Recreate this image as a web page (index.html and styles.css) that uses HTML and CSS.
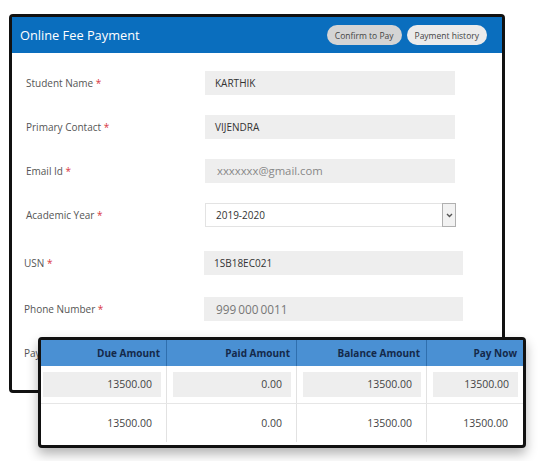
FILE: index.html
```html
<!DOCTYPE html>
<html lang="en">
<head>
  <meta charset="UTF-8">
  <title>Online Fee Payment</title>
  <link rel="stylesheet" href="styles.css">
</head>
<body>
  <!-- fee payment form -->
  <div class="card">
    <div class="card-head">
      <div class="title">Online Fee Payment</div>
      <div class="actions">
        <button class="pill pill-dark">Confirm to Pay</button>
        <button class="pill">Payment history</button>
      </div>
    </div>
    <div class="form">
      <div class="row">
        <label>Student Name <span class="req">*</span></label>
        <div class="field">KARTHIK</div>
      </div>
      <div class="row">
        <label>Primary Contact <span class="req">*</span></label>
        <div class="field">VIJENDRA</div>
      </div>
      <div class="row">
        <label>Email Id <span class="req">*</span></label>
        <div class="field ph">xxxxxxx@gmail.com</div>
      </div>
      <div class="row">
        <label>Academic Year <span class="req">*</span></label>
        <div class="field select">2019-2020<span class="arrow"><svg width="7" height="5" viewBox="0 0 7 5"><path d="M1 1l2.5 2.5L6 1" fill="none" stroke="#555" stroke-width="1.4"/></svg></span></div>
      </div>
      <div class="row wide gap-lg">
        <label>USN <span class="req">*</span></label>
        <div class="field">1SB18EC021</div>
      </div>
      <div class="row wide gap-md">
        <label>Phone Number <span class="req">*</span></label>
        <div class="field ph ph-dark">999 000 0011</div>
      </div>
      <div class="row wide">
        <label>Payment Mode <span class="req">*</span></label>
        <div class="field"></div>
      </div>
    </div>
  </div>

  <!-- amounts popup -->
  <div class="amounts">
    <table>
      <tr>
        <th class="c1">Due Amount</th>
        <th class="c2">Paid Amount</th>
        <th class="c3">Balance Amount</th>
        <th class="c4">Pay Now</th>
      </tr>
      <tr class="boxed">
        <td><span>13500.00</span></td>
        <td><span>0.00</span></td>
        <td><span>13500.00</span></td>
        <td><span>13500.00</span></td>
      </tr>
      <tr class="plain">
        <td>13500.00</td>
        <td>0.00</td>
        <td>13500.00</td>
        <td>13500.00</td>
      </tr>
    </table>
  </div>
</body>
</html>
```

FILE: styles.css
```css
body { margin:0; background:#fff; font-family:"Open Sans", "DejaVu Sans", sans-serif; }
.card { width:490px; margin:14px 0 0 9px; border:3px solid #111; border-radius:4px; background:#fff; }
.card-head { height:36px; background:#0a6ebe; display:flex; align-items:center; padding:0 15px 0 8px; }
.card-head .title { color:#fff; font-size:12.8px; }
.card-head .actions { margin-left:auto; display:flex; gap:5px; }
.pill { border:0; border-radius:10px; height:20px; padding:0 8px; background:#ebebeb; color:#444; font-family:inherit; font-size:8.5px; }
.pill-dark { background:#d4d4d4; }
.form { padding:18px 0 25px 14px; }
.row { display:flex; align-items:center; height:24px; margin-bottom:20px; }
.row label { width:179px; font-size:10px; color:#555; }
.req { color:#d9363e; }
.field { width:240px; height:24px; line-height:24px; padding-left:10px; background:#eee; font-size:10px; color:#333; }
.field.ph { font-size:11.3px; color:#888; padding-left:12px; width:238px; }
.field.ph-dark { color:#777; font-size:11.8px; word-spacing:-1px; }
.select { position:relative; background:#fff; border:1px solid #e3e3e3; height:22px; line-height:22px; width:239px; }
.select .arrow { position:absolute; right:-1px; top:-1px; width:12px; height:22px; border:1px solid #b0b0b0; background:#f2f2f2; display:flex; align-items:center; justify-content:center; }
.row.wide { margin-left:-2px; }
.row.wide label { width:180px; }
.row.wide .field { width:249px; }
.row.wide .field.ph { width:247px; }
.row.gap-lg { margin-top:24px; }
.row.gap-md { margin-top:22px; }
.row:last-child { margin-bottom:0; }

.amounts { position:absolute; left:38px; top:337px; width:482px; border:3px solid #111; border-radius:4px; background:#fff; box-shadow:0 6px 12px rgba(0,0,0,.3); }
.amounts table { width:100%; border-collapse:collapse; table-layout:fixed; margin-bottom:3px; }
.amounts th { height:26px; background:#4a90d3; color:#14294a; font-size:10px; font-weight:700; text-align:right; padding:0 6px 0 0; border-left:1px solid #2f6fae; }
.amounts th:first-child, .amounts td:first-child { border-left:0; }
.amounts .c1 { width:119px; }
.amounts .c2, .amounts .c3 { width:123px; }
.amounts td { font-size:10.5px; color:#444; text-align:right; border-left:1px solid #e2e2e2; border-bottom:1px solid #e6e6e6; }
.boxed td { height:37px; padding:0 5px 0 2px; }
.boxed td span { display:block; height:25px; line-height:25px; background:#eee; padding-right:9px; }
.boxed td:nth-child(n+2) { padding-left:6px; }
.plain td { height:36px; padding-right:14px; }
.plain td:last-child { padding-right:15px; }
.amounts tr.plain td { border-bottom:0; }
```
